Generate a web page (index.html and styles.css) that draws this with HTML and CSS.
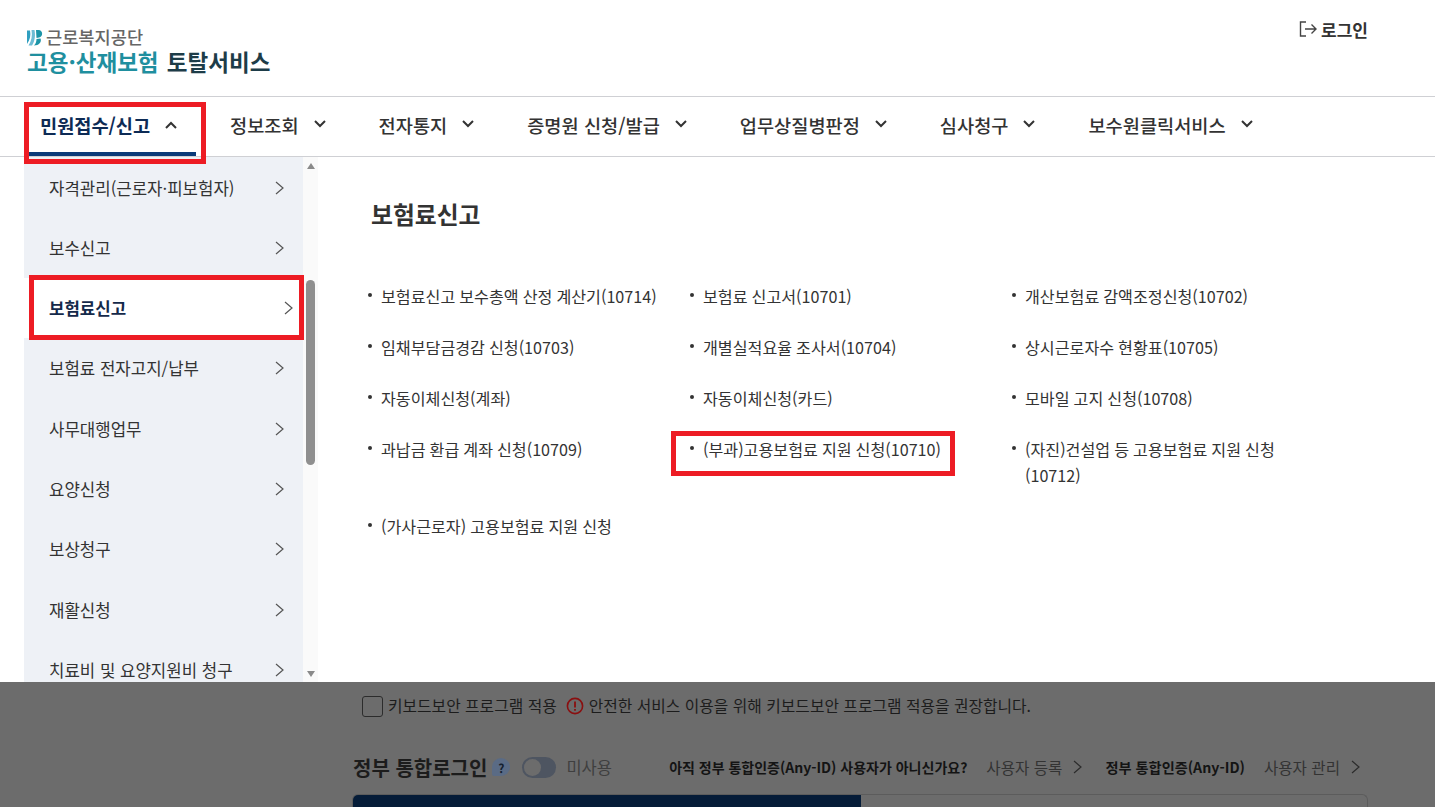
FILE: index.html
```html
<!DOCTYPE html>
<html lang="ko">
<head>
<meta charset="utf-8">
<title>고용·산재보험 토탈서비스</title>
<link rel="stylesheet" href="styles.css">
</head>
<body>
<div class="page">
  <header class="top">
    <div class="logo">
      <div class="logo-org">
        <svg class="logo-mark" width="16" height="17" viewBox="0 0 16 17"><path d="M0 1.5H3 C4 6 3 11 0 15 Z" fill="#2f9fc0"/><path d="M4.5 1 C5.5 7 4.5 12 1.5 16.5 H5 C8 12 8.5 6 7.5 1 Z" fill="#6dbcd4"/><path d="M9 1 H11.5 C16 1 16.5 7.5 12 8.5 L9.5 9 Z" fill="#1d95a8"/><path d="M9.5 10 L13.5 9.5 C15 13 12 16.5 7 16.5 C9 14.5 9.5 12 9.5 10 Z" fill="#1d95a8"/></svg>
        <span>근로복지공단</span>
      </div>
      <div class="logo-title"><b class="teal">고용·산재보험</b> <b class="dark">토탈서비스</b></div>
    </div>
    <a class="login">
      <svg width="19" height="18" viewBox="0 0 19 18" fill="none" stroke="#444" stroke-width="1.4"><path d="M7 2H1.5V16H7"/><path d="M6 9H17M12.5 4.5L17 9L12.5 13.5"/></svg>
      <span>로그인</span>
    </a>
  </header>
  <nav class="nav">
    <a class="nav-item active">민원접수/신고<svg class="chev" width="12" height="8" viewBox="0 0 12 8"><path d="M1 7L6 2L11 7"/></svg></a>
    <a class="nav-item">정보조회<svg class="chev" width="12" height="8" viewBox="0 0 12 8"><path d="M1 1L6 6L11 1"/></svg></a>
    <a class="nav-item">전자통지<svg class="chev" width="12" height="8" viewBox="0 0 12 8"><path d="M1 1L6 6L11 1"/></svg></a>
    <a class="nav-item">증명원 신청/발급<svg class="chev" width="12" height="8" viewBox="0 0 12 8"><path d="M1 1L6 6L11 1"/></svg></a>
    <a class="nav-item">업무상질병판정<svg class="chev" width="12" height="8" viewBox="0 0 12 8"><path d="M1 1L6 6L11 1"/></svg></a>
    <a class="nav-item">심사청구<svg class="chev" width="12" height="8" viewBox="0 0 12 8"><path d="M1 1L6 6L11 1"/></svg></a>
    <a class="nav-item">보수원클릭서비스<svg class="chev" width="12" height="8" viewBox="0 0 12 8"><path d="M1 1L6 6L11 1"/></svg></a>
  </nav>
  <main class="panel">
    <aside class="side">
      <ul class="side-list">
        <li class="side-item">자격관리(근로자·피보험자)<svg class="arrow" width="9" height="14" viewBox="0 0 9 14"><path d="M1 1L8 7L1 13"/></svg></li>
        <li class="side-item">보수신고<svg class="arrow" width="9" height="14" viewBox="0 0 9 14"><path d="M1 1L8 7L1 13"/></svg></li>
        <li class="side-item current">보험료신고<svg class="arrow" width="9" height="14" viewBox="0 0 9 14"><path d="M1 1L8 7L1 13"/></svg></li>
        <li class="side-item">보험료 전자고지/납부<svg class="arrow" width="9" height="14" viewBox="0 0 9 14"><path d="M1 1L8 7L1 13"/></svg></li>
        <li class="side-item">사무대행업무<svg class="arrow" width="9" height="14" viewBox="0 0 9 14"><path d="M1 1L8 7L1 13"/></svg></li>
        <li class="side-item">요양신청<svg class="arrow" width="9" height="14" viewBox="0 0 9 14"><path d="M1 1L8 7L1 13"/></svg></li>
        <li class="side-item">보상청구<svg class="arrow" width="9" height="14" viewBox="0 0 9 14"><path d="M1 1L8 7L1 13"/></svg></li>
        <li class="side-item">재활신청<svg class="arrow" width="9" height="14" viewBox="0 0 9 14"><path d="M1 1L8 7L1 13"/></svg></li>
        <li class="side-item">치료비 및 요양지원비 청구<svg class="arrow" width="9" height="14" viewBox="0 0 9 14"><path d="M1 1L8 7L1 13"/></svg></li>
      </ul>
      <div class="scrollbar">
        <span class="sb-up"></span>
        <span class="sb-thumb"></span>
        <span class="sb-down"></span>
      </div>
    </aside>
    <section class="content">
      <h2 class="content-title">보험료신고</h2>
      <ul class="links">
        <li>보험료신고 보수총액 산정 계산기(10714)</li>
        <li>보험료 신고서(10701)</li>
        <li>개산보험료 감액조정신청(10702)</li>
        <li>임채부담금경감 신청(10703)</li>
        <li>개별실적요율 조사서(10704)</li>
        <li>상시근로자수 현황표(10705)</li>
        <li>자동이체신청(계좌)</li>
        <li>자동이체신청(카드)</li>
        <li>모바일 고지 신청(10708)</li>
        <li>과납금 환급 계좌 신청(10709)</li>
        <li>(부과)고용보험료 지원 신청(10710)</li>
        <li>(자진)건설업 등 고용보험료 지원 신청(10712)</li>
        <li>(가사근로자) 고용보험료 지원 신청</li>
      </ul>
    </section>
  </main>
  <div class="mark mark-nav"></div>
  <div class="mark mark-side"></div>
  <div class="mark mark-link"></div>
  <div class="dim">
    <div class="dim-inner">
      <div class="kbd-row">
        <span class="checkbox"></span>
        <span>키보드보안 프로그램 적용</span>
        <svg class="warn" width="18" height="18" viewBox="0 0 18 18"><circle cx="9" cy="9" r="7.6" fill="none" stroke="#8a0f10" stroke-width="1.6"/><path d="M9 4.5V10.5M9 12V13.8" stroke="#8a0f10" stroke-width="1.8" fill="none"/></svg>
        <span>안전한 서비스 이용을 위해 키보드보안 프로그램 적용을 권장합니다.</span>
      </div>
      <div class="gov-row">
        <strong class="gov-title">정부 통합로그인</strong>
        <span class="help">?</span>
        <span class="toggle"><span class="knob"></span></span>
        <span class="off">미사용</span>
        <span class="gov-links">
          <b>아직 정부 통합인증(Any-ID) 사용자가 아니신가요?</b>
          <span class="gl">사용자 등록<svg class="gl-arrow" width="9" height="14" viewBox="0 0 9 14"><path d="M1 1L8 7L1 13"/></svg></span>
          <b>정부 통합인증(Any-ID)</b>
          <span class="gl">사용자 관리<svg class="gl-arrow" width="9" height="14" viewBox="0 0 9 14"><path d="M1 1L8 7L1 13"/></svg></span>
        </span>
      </div>
      <div class="tabs"><span class="tab-on"></span><span class="tab-off"></span></div>
    </div>
  </div>
</div>
</body>
</html>
```
FILE: styles.css
```css
* { box-sizing: border-box; }
html, body { margin: 0; padding: 0; }
body { font-family: "Noto Sans CJK KR", "Noto Sans", sans-serif; color: #333; background: #fff; }
.page { position: relative; width: 1435px; height: 807px; overflow: hidden; }
ul { list-style: none; margin: 0; padding: 0; }

.top { height: 97px; border-bottom: 1px solid #cfd0d4; display: flex; justify-content: space-between; padding: 27px 67px 0 27px; }
.logo-org { display: flex; align-items: center; gap: 3px; font-size: 17.6px; line-height: 20px; color: #666; font-weight: 500; }
.logo-title { margin-top: -1px; font-size: 22.5px; line-height: 30px; white-space: nowrap; }
.teal { color: #1f8f9f; font-weight: 700; }
.dark { color: #1d3c48; font-weight: 700; margin-left: 2px; }
.login { display: flex; align-items: center; gap: 3px; height: 20px; margin-top: -8px; font-size: 17px; font-weight: 700; color: #333; }

.nav { height: 60px; border-bottom: 1px solid #cfd0d4; display: flex; padding-left: 29px; }
.nav-item { display: flex; align-items: center; height: 59px; padding-bottom: 5px; margin-right: 53px; font-size: 18.65px; font-weight: 500; color: #333; white-space: nowrap; }
.nav-item.active { font-weight: 700; color: #0d2b55; border-bottom: 4px solid #0a3a78; padding: 0 0 0 11px; margin-right: 34px; width: 167px; }
.chev { margin-left: 15px; fill: none; stroke: #333; stroke-width: 2; }

.panel { display: flex; height: 525px; }
.side { display: flex; margin-left: 24px; width: 294px; height: 525px; }
.side-list { width: 279px; padding-top: 0.4px; background: #eef1f6; overflow: hidden; }
.side-item { height: 60.3px; display: flex; align-items: center; justify-content: space-between; padding: 0 19px 0 25px; font-size: 16.75px; color: #333; white-space: nowrap; }
.side-item.current { background: #fff; font-weight: 700; color: #14294a; padding-right: 10px; }
.arrow { fill: none; stroke: #555; stroke-width: 1.2; flex: none; }
.scrollbar { width: 15px; background: #fafafa; display: flex; flex-direction: column; align-items: center; position: relative; }
.sb-up { width: 0; height: 0; margin-top: 6px; border: 4.5px solid transparent; border-top: 0; border-bottom: 6px solid #8a8a8a; }
.sb-thumb { width: 9px; height: 185px; margin-top: 111px; border-radius: 5px; background: #8f8f8f; }
.sb-down { width: 0; height: 0; position: absolute; top: 514px; border: 4.5px solid transparent; border-bottom: 0; border-top: 6px solid #8a8a8a; }

.content { flex: 1; padding: 40px 0 0 53px; }
.content-title { margin: 0; font-size: 23.8px; line-height: 34px; font-weight: 700; color: #333; }
.links { display: grid; grid-template-columns: 322px 322px 280px; margin-top: 52px; }
.links li { position: relative; padding: 0 0 0 10px; margin-bottom: 24.9px; font-size: 16.15px; word-spacing: -0.5px; line-height: 26px; color: #333; }
.links li::before { content: ""; position: absolute; left: -3px; top: 10px; width: 4px; height: 4px; border-radius: 50%; background: #333; }

.mark { position: absolute; border: 5px solid #ed1c24; pointer-events: none; }
.mark-nav { left: 24px; top: 102px; width: 182px; height: 62px; }
.mark-side { left: 29px; top: 275px; width: 275px; height: 65px; }
.mark-link { left: 671px; top: 431px; width: 284px; height: 45px; }

.dim { position: absolute; left: 0; right: 0; top: 682px; height: 125px; background: #6c6c6c; }
.dim-inner { width: 1016px; margin-left: 352px; }
.kbd-row { display: flex; align-items: center; gap: 5px; padding: 12px 0 0 10px; font-size: 15.8px; line-height: 24px; color: #1c1c1c; }
.checkbox { width: 21px; height: 21px; border: 1px solid #2c2c2c; border-radius: 3px; }
.warn { margin-left: 4px; }
.gov-row { display: flex; align-items: center; height: 30px; margin-top: 34px; padding-left: 1px; }
.gov-title { font-size: 20px; font-weight: 700; color: #1c1c1c; }
.help { width: 18px; height: 18px; margin-left: 5px; border-radius: 50% 50% 50% 2px; background: #5a6b85; color: #15202f; font-size: 12px; font-weight: 700; display: flex; align-items: center; justify-content: center; }
.toggle { width: 34px; height: 21px; margin-left: 12px; border-radius: 11px; background: #4e5561; padding: 2px; }
.knob { display: block; width: 17px; height: 17px; border-radius: 50%; background: #6c6c6c; }
.off { margin-left: 10px; font-size: 16.5px; color: #3f3f3f; }
.gov-links { margin-left: auto; display: flex; align-items: center; font-size: 14px; color: #141414; white-space: nowrap; }
.gov-links b { font-weight: 700; }
.gov-links .gl + b { font-size: 14.2px; }
.gl { display: flex; align-items: center; font-size: 15.6px; color: #333; margin: 0 23px 0 19px; }
.gl:last-child { margin-right: 8px; }
.gl-arrow { margin-left: 11px; fill: none; stroke: #2c2c2c; stroke-width: 1.2; }
.tabs { display: flex; height: 20px; margin-top: 12px; border-radius: 6px 6px 0 0; overflow: hidden; border: 1px solid #5c5c5c; border-bottom: 0; }
.tab-on { width: 508px; background: #051c38; }
.tab-off { flex: 1; }
```
